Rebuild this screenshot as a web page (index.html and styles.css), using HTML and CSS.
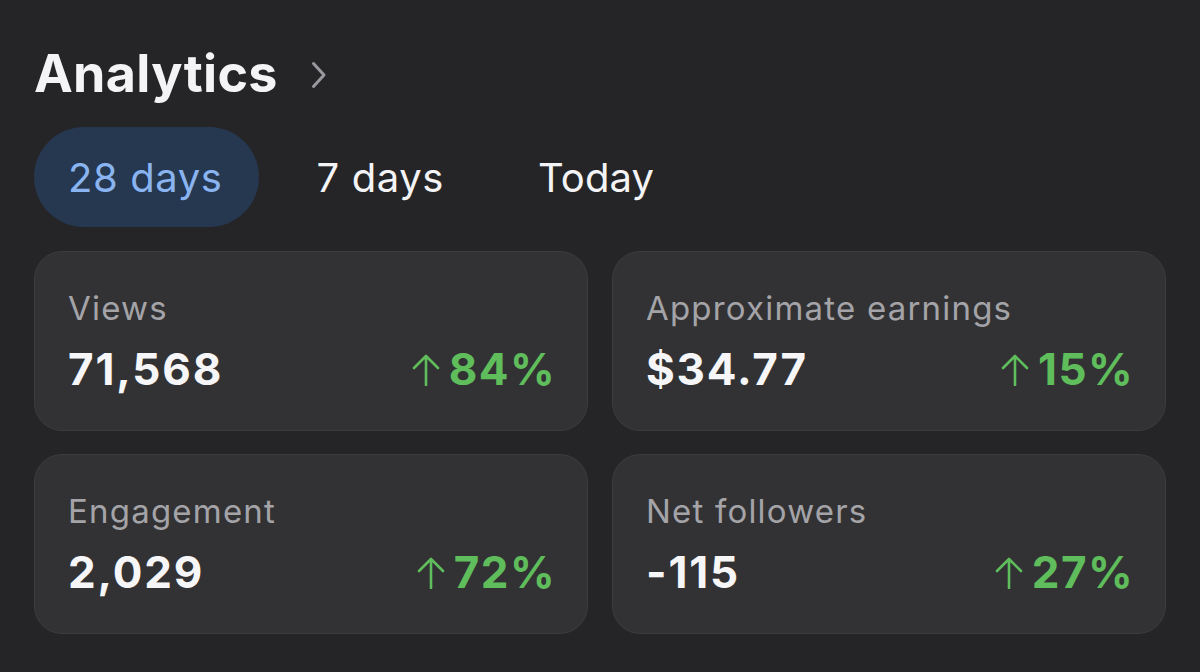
FILE: index.html
```html
<!DOCTYPE html>
<html>
<head>
<meta charset="utf-8">
<link rel="stylesheet" href="styles.css">
</head>
<body>
<div class="page">
  <div class="header">
    <h1 class="title">Analytics</h1>
    <svg class="chev" width="16" height="28" viewBox="0 0 16 28"><path d="M2.5 2.5 L13 14 L2.5 25.5" fill="none" stroke="#9a9a9e" stroke-width="3" stroke-linecap="round" stroke-linejoin="round"/></svg>
  </div>
  <div class="tabs">
    <div class="tab active">28 days</div>
    <div class="tab">7 days</div>
    <div class="tab">Today</div>
  </div>
  <div class="grid">
    <div class="card">
      <div class="label">Views</div>
      <div class="row"><span class="value">71,568</span><span class="delta"><svg class="arrow" width="28" height="32" viewBox="0 0 28 32"><path d="M14 2 V31 M2 14 L14 2 L26 14" fill="none" stroke="#5fbd5c" stroke-width="2.6" stroke-linecap="round" stroke-linejoin="round"/></svg>84%</span></div>
    </div>
    <div class="card">
      <div class="label">Approximate earnings</div>
      <div class="row"><span class="value">$34.77</span><span class="delta"><svg class="arrow" width="28" height="32" viewBox="0 0 28 32"><path d="M14 2 V31 M2 14 L14 2 L26 14" fill="none" stroke="#5fbd5c" stroke-width="2.6" stroke-linecap="round" stroke-linejoin="round"/></svg>15%</span></div>
    </div>
    <div class="card">
      <div class="label">Engagement</div>
      <div class="row"><span class="value">2,029</span><span class="delta"><svg class="arrow" width="28" height="32" viewBox="0 0 28 32"><path d="M14 2 V31 M2 14 L14 2 L26 14" fill="none" stroke="#5fbd5c" stroke-width="2.6" stroke-linecap="round" stroke-linejoin="round"/></svg>72%</span></div>
    </div>
    <div class="card">
      <div class="label">Net followers</div>
      <div class="row"><span class="value">-115</span><span class="delta"><svg class="arrow" width="28" height="32" viewBox="0 0 28 32"><path d="M14 2 V31 M2 14 L14 2 L26 14" fill="none" stroke="#5fbd5c" stroke-width="2.6" stroke-linecap="round" stroke-linejoin="round"/></svg>27%</span></div>
    </div>
  </div>
</div>
</body>
</html>
```
FILE: styles.css
```css
html, body {
  margin: 0;
  padding: 0;
  background: #252527;
  width: 1200px;
  height: 672px;
  overflow: hidden;
}
.page {
  padding: 44px 34px 0 34px;
  font-family: Inter, "Noto Sans", sans-serif;
  color: #f4f4f6;
}
.header {
  display: flex;
  align-items: center;
  gap: 33px;
  height: 60px;
}
.title {
  margin: 0;
  font-size: 52px;
  font-weight: 700;
  letter-spacing: 0.3px;
  line-height: 60px;
}
.chev { margin-top: 2px; }
.tabs {
  display: flex;
  align-items: center;
  margin-top: 23px;
}
.tab {
  height: 100px;
  display: flex;
  align-items: center;
  padding: 0 36px 0 34px;
  font-size: 40px;
  font-weight: 400;
  color: #f4f4f6;
  border-radius: 50px;
  letter-spacing: 0.6px;
}
.tab + .tab { padding: 0 24px 0 58px; }
.tab + .tab + .tab { padding-left: 70px; letter-spacing: 0.1px; }
.tab.active {
  background: #263850;
  color: #8ab4f0;
}
.grid {
  margin-top: 24px;
  display: grid;
  grid-template-columns: 554px 554px;
  grid-auto-rows: 180px;
  column-gap: 24px;
  row-gap: 23px;
}
.card {
  background: #323234;
  border: 1.5px solid #3c3c3f;
  border-radius: 28px;
  box-sizing: border-box;
  padding: 36px 31px 0 33px;
  display: flex;
  flex-direction: column;
}
.label {
  font-size: 33px;
  color: #a4a4a8;
  line-height: 40px;
  letter-spacing: 1.2px;
}
.row {
  display: flex;
  justify-content: space-between;
  align-items: baseline;
  margin-top: 14px;
}
.value {
  font-size: 44px;
  font-weight: 700;
  color: #f6f6f8;
  letter-spacing: 1.8px;
}
.delta {
  font-size: 44px;
  font-weight: 700;
  color: #5fbd5c;
  letter-spacing: 1.4px;
  display: flex;
  align-items: baseline;
}
.arrow {
  margin-right: 9px;
  align-self: center;
  margin-top: 2px;
}
```
